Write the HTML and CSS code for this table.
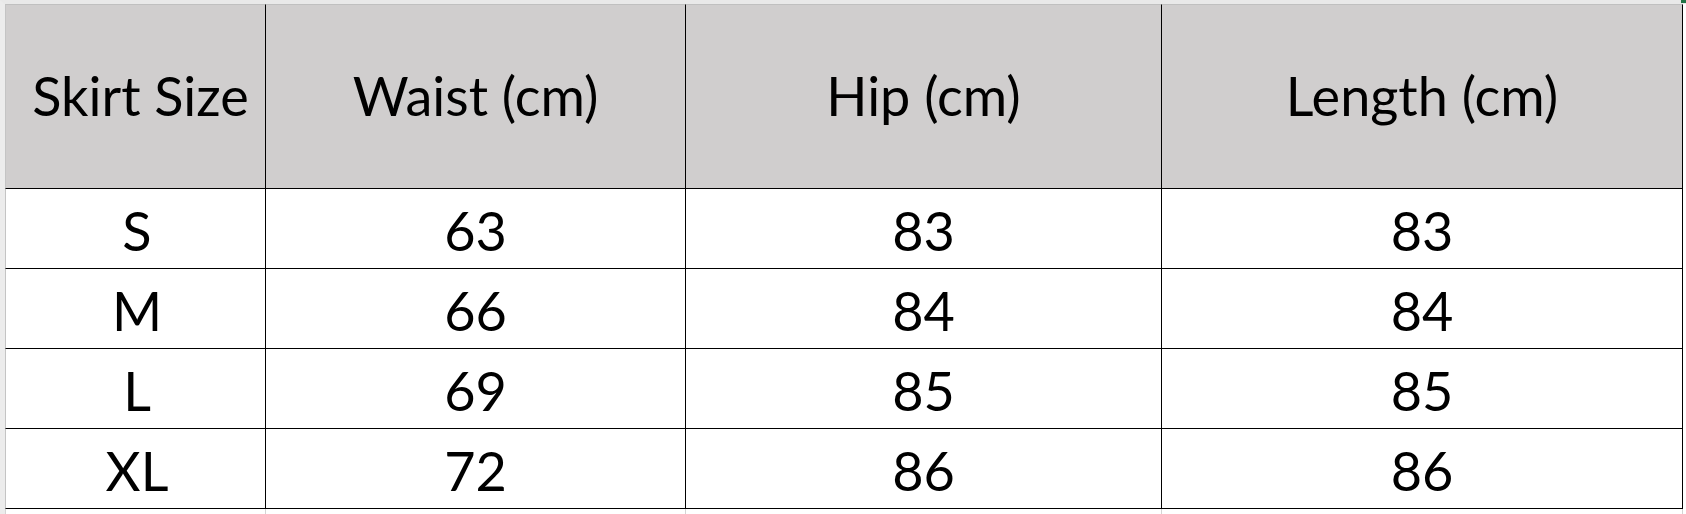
FILE: index.html
```html
<!DOCTYPE html>
<html lang="en">
<head>
<meta charset="utf-8">
<title>Skirt Size Chart</title>
<link rel="stylesheet" href="styles.css">
</head>
<body>
<div class="sheet">
  <span class="select-mark"></span>
  <table class="size-table">
    <colgroup>
      <col class="c1"><col class="c2"><col class="c3"><col class="c4">
    </colgroup>
    <thead>
      <tr>
        <th class="first-head">Skirt Size</th>
        <th>Waist (cm)</th>
        <th>Hip (cm)</th>
        <th>Length (cm)</th>
      </tr>
    </thead>
    <tbody>
      <tr><td>S</td><td>63</td><td>83</td><td>83</td></tr>
      <tr><td>M</td><td>66</td><td>84</td><td>84</td></tr>
      <tr><td>L</td><td>69</td><td>85</td><td>85</td></tr>
      <tr><td>XL</td><td>72</td><td>86</td><td>86</td></tr>
      <tr class="grid-row"><td></td><td></td><td></td><td></td></tr>
    </tbody>
  </table>
</div>
</body>
</html>
```
FILE: styles.css
```css
* { box-sizing: border-box; }
html, body { margin: 0; padding: 0; background: #ffffff; }
body { width: 1686px; height: 514px; overflow: hidden; }

.sheet {
  position: relative;
  height: 514px;
  border-top: 4px solid #e9e9e9;
  border-left: 5px solid #ececec;
}

.select-mark {
  position: absolute;
  top: -4px;
  right: 0;
  width: 5px;
  height: 3px;
  background: #217346;
}

.size-table {
  border-collapse: separate;
  border-spacing: 0;
  table-layout: fixed;
  width: 1678px;
  font-family: Lato, "Open Sans", "Liberation Sans", sans-serif;
  color: #000;
}

.c1 { width: 261px; }
.c2 { width: 420px; }
.c3 { width: 476px; }
.c4 { width: 521px; }

.size-table th,
.size-table td {
  padding: 0;
  text-align: center;
  vertical-align: middle;
  border-right: 1px solid #000;
  border-bottom: 1px solid #000;
}

.size-table th:first-child,
.size-table td:first-child {
  border-left: 1px solid #c4c4c4;
}

.size-table td:first-child { padding-left: 3px; }

.size-table th {
  height: 185px;
  background: #d0cece;
  border-top: 1px solid #c0c0c0;
  font-weight: 400;
  font-size: 54px;
  padding-bottom: 2px;
}

.size-table th.first-head { padding-left: 10px; }

.size-table td {
  height: 80px;
  font-size: 54px;
  padding-top: 4px;
}

.size-table .grid-row td {
  height: 6px;
  padding: 0;
  border-bottom: none;
  border-right: 1px solid #d4d4d4;
}
.size-table .grid-row td:first-child { border-left: 1px solid #d4d4d4; }
```
